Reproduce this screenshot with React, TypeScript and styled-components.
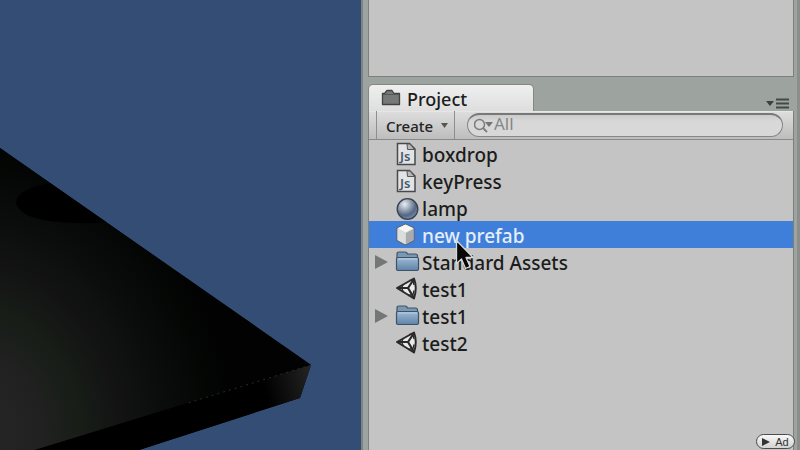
import React from "react";
import styled, { createGlobalStyle } from "styled-components";

const GlobalStyle = createGlobalStyle`
  * { box-sizing: border-box; }
  body { margin: 0; background: #9fa6a1; font-family: "Noto Sans", "Open Sans", sans-serif; color: #1c1c1c; }
  button, input { font-family: inherit; }
`;

const Window = styled.main`
  position: relative;
  display: grid;
  grid-template-columns: minmax(0, 361fr) minmax(0, 439fr);
  height: 100vh;
  overflow: hidden;
`;

const SceneView = styled.section`
  background: #344d75;
  overflow: hidden;
`;

const SceneDrawing = styled.svg`
  display: block;
  width: 100%;
  height: 100%;
`;

const Dock = styled.section`
  display: flex;
  flex-direction: column;
  padding: 0 3px 0 5px;
  background: #9da49f;
  border-left: 2px solid #7b8384;
  border-right: 3px solid #8c8e8d;
  min-width: 0;
`;

const UpperPanel = styled.div`
  flex: 0 0 77px;
  background: #c3c4c3;
  border: 1px solid #7b807d;
  border-top: 0;
`;

const TabBar = styled.header`
  display: flex;
  justify-content: space-between;
  align-items: flex-end;
  flex: 0 0 34px;
  padding-right: 4px;
`;

const Tab = styled.button`
  display: flex;
  align-items: center;
  gap: 6px;
  width: 166px;
  height: 27px;
  padding: 2px 12px 0;
  border: 1px solid #828884;
  border-bottom: 0;
  border-radius: 5px 5px 0 0;
  background: linear-gradient(#efefef, #dedede);
  color: #1c1c1c;
  font-size: 18px;
  font-weight: 500;
  line-height: 24px;
`;

const MenuButton = styled.button`
  display: flex;
  padding: 0 0 2px;
  border: 0;
  background: none;
`;

const Body = styled.div`
  flex: 1;
  min-height: 0;
  background: #c3c4c3;
  border: 1px solid #7b807d;
  border-width: 0 1px;
`;

const Toolbar = styled.div`
  display: flex;
  align-items: stretch;
  height: 29px;
  padding: 0 10px 0 7px;
  background: linear-gradient(#dedede, #bcbdbc);
  border-bottom: 1px solid #888a89;
  box-shadow: inset 0 1px #e6e6e6;
`;

const CreateButton = styled.button`
  display: flex;
  align-items: center;
  gap: 8px;
  width: 79px;
  padding: 2px 0 0 9px;
  border: 1px solid #8d8f8e;
  border-width: 0 1px;
  background: none;
  color: #242424;
  font-size: 15px;
  font-weight: 500;
  line-height: 20px;
`;

const Search = styled.label`
  display: flex;
  flex: 1;
  align-items: center;
  gap: 0;
  height: 24px;
  margin: 2px 0 0 12px;
  padding-left: 6px;
  border: 1px solid #858786;
  border-top: 2px solid #777978;
  border-radius: 12px;
  background: linear-gradient(#cbcbcb, #d8d8d8 30%);
  min-width: 0;
`;

const SearchInput = styled.input`
  flex: 1;
  min-width: 0;
  padding: 0 0 3px;
  border: 0;
  outline: 0;
  background: none;
  color: #6c6e6d;
  font-size: 17px;
  line-height: 18px;
  &::placeholder { color: #858786; opacity: 1; }
`;

const AssetList = styled.ul`
  list-style: none;
  margin: 0;
  padding: 0;
`;

const AssetRow = styled.li<{ $selected?: boolean }>`
  position: relative;
  display: grid;
  grid-template-columns: 20px 25px 1fr;
  align-items: center;
  column-gap: 2px;
  height: 27px;
  padding-left: 4px;
  background: ${(p) => (p.$selected ? "#407fd9" : "transparent")};
  color: ${(p) => (p.$selected ? "#e4eefb" : "#1c1c1c")};
`;

const AssetName = styled.span`
  grid-column: 3;
  padding-top: 3px;
  font-size: 19px;
  font-weight: 500;
  line-height: 24px;
  white-space: nowrap;
`;

const Disclosure = styled.button`
  grid-column: 1;
  display: flex;
  padding: 0 2px;
  border: 0;
  background: none;
`;

const IconCell = styled.span`
  grid-column: 2;
  display: flex;
`;

const Cursor = styled.svg`
  position: absolute;
  z-index: 1;
  left: 86px;
  top: 18px;
`;

const AdButton = styled.button`
  position: absolute;
  right: 5px;
  bottom: 1px;
  display: flex;
  align-items: center;
  justify-content: center;
  gap: 5px;
  width: 39px;
  height: 15px;
  padding: 0;
  border: 1px solid #4c4c4c;
  border-radius: 8px;
  background: linear-gradient(#f8f8f8, #d2d2d2);
  color: #333;
  font-family: "Liberation Sans", Arial, sans-serif;
  font-size: 11px;
  line-height: 12px;
`;

type IconKind = "script" | "material" | "prefab" | "folder" | "scene";

const ScriptIcon = () => (
  <svg width="24" height="26" viewBox="0 0 24 26">
    <path d="M2.500 2.500h12l5.500 5.500v15.500h-17.500z" fill="#e2e3e5" stroke="#4a4a4a" strokeWidth="1.500" />
    <path d="M12 3h3l4.500 5.500h-7z" fill="#b5b7b8" stroke="#555" strokeWidth="1" />
    <text x="5" y="20" fontFamily="Noto Sans, sans-serif" fontSize="13" fontWeight="600" fill="#46586c">Js</text>
  </svg>
);

const MaterialIcon = () => (
  <svg width="24" height="26" viewBox="0 0 24 26">
    <defs>
      <radialGradient id="ball" cx="36%" cy="27%" r="72%">
        <stop offset="0" stopColor="#e9edf3" />
        <stop offset=".4" stopColor="#9aa6b8" />
        <stop offset=".75" stopColor="#566783" />
        <stop offset="1" stopColor="#6f84a8" />
      </radialGradient>
    </defs>
    <circle cx="12.500" cy="14" r="10.300" fill="url(#ball)" stroke="#3a414c" strokeWidth="1.300" />
  </svg>
);

const PrefabIcon = () => (
  <svg width="24" height="26" viewBox="0 0 24 26">
    <path d="M10.500 2L19 6v12.500L10.500 23 2 18.500V6z" fill="#d4d5d5" stroke="#596475" strokeWidth="1.200" strokeLinejoin="round" />
    <path d="M2.500 6.200L10.500 2.500l8 3.700-8 4.300z" fill="#f6f6f4" />
    <path d="M2.500 7l7.500 4v11.300L2.500 18z" fill="#dcdddd" />
    <path d="M11 11l7.500-4v11L11 22.300z" fill="#a9acaf" />
  </svg>
);

const FolderIcon = () => (
  <svg width="25" height="26" viewBox="0 0 25 26">
    <defs>
      <linearGradient id="folder" x2="0" y2="1">
        <stop offset="0" stopColor="#9fbad4" />
        <stop offset="1" stopColor="#5e83a9" />
      </linearGradient>
    </defs>
    <path d="M2 21V5q0-2 2-2h6q2 0 2.500 2h8q2 0 2 2v3" fill="#7898b6" stroke="#3f5266" strokeWidth="1.200" />
    <rect x="1.500" y="8.500" width="22" height="13" rx="1.500" fill="url(#folder)" stroke="#3d5167" strokeWidth="1.200" />
    <path d="M3 10h19" stroke="#b8cee2" />
  </svg>
);

const SceneIcon = () => (
  <svg width="24" height="26" viewBox="0 0 24 26">
    <path d="M2 12L19 2.500q3.500 9 0 20z" fill="#e9eaea" stroke="#292929" strokeWidth="2" strokeLinejoin="round" />
    <path d="M2 12h11L19 3M13 12l6 10" fill="none" stroke="#292929" strokeWidth="2.200" />
    <path d="M8 9l-1.500 3 2 4M14.500 4l3.500 1 1 4M13 19.500l5-1 1-4" fill="none" stroke="#292929" strokeWidth="1.300" />
  </svg>
);

const icons: Record<IconKind, React.FC> = {
  script: ScriptIcon,
  material: MaterialIcon,
  prefab: PrefabIcon,
  folder: FolderIcon,
  scene: SceneIcon,
};

const assets: { name: string; kind: IconKind; selected?: boolean }[] = [
  { name: "boxdrop", kind: "script" },
  { name: "keyPress", kind: "script" },
  { name: "lamp", kind: "material" },
  { name: "new prefab", kind: "prefab", selected: true },
  { name: "Standard Assets", kind: "folder" },
  { name: "test1", kind: "scene" },
  { name: "test1", kind: "folder" },
  { name: "test2", kind: "scene" },
];

const Platform = () => (
  <SceneDrawing viewBox="0 0 361 450" preserveAspectRatio="xMinYMax slice" aria-label="Scene">
    <defs>
      <radialGradient id="surface" gradientUnits="userSpaceOnUse" cx="0" cy="0" r="1" gradientTransform="translate(-30 430) rotate(-12) scale(265 300)">
        <stop offset="0" stopColor="#292829" />
        <stop offset=".25" stopColor="#212121" />
        <stop offset=".42" stopColor="#171d17" />
        <stop offset=".56" stopColor="#131314" />
        <stop offset=".8" stopColor="#070a08" />
        <stop offset="1" stopColor="#010201" />
      </radialGradient>
      <linearGradient id="edge" gradientUnits="userSpaceOnUse" x1="265" y1="390" x2="312" y2="378">
        <stop offset="0" stopColor="#000" />
        <stop offset="1" stopColor="#232323" />
      </linearGradient>
    </defs>
    <path d="M0 148L311 365 300 398 139 450H0z" fill="#000" />
    <path d="M0 148L311 365 35 450H0z" fill="url(#surface)" />
    <path d="M311 365L300 398 139 450H35z" fill="url(#edge)" />
    <path d="M50 183Q17 189 16 203 20 222 78 223 94 224 106 222z" fill="#000" />
    <path d="M311 365L188 403" stroke="#292b29" strokeWidth="1" strokeDasharray="2 4" />
  </SceneDrawing>
);

export default function App() {
  return (
    <>
      <GlobalStyle />
      <Window>
        <SceneView><Platform /></SceneView>
        <Dock>
          <UpperPanel />
          <TabBar>
            <Tab>
              <svg width="20" height="20" viewBox="0 0 20 20">
                <path d="M1.500 15.500V4.500H3.500L6 1.500h5l2 3h5.500v11z" fill="#777979" stroke="#414343" strokeWidth="1.300" strokeLinejoin="round" />
                <path d="M2 5.500h16" stroke="#565858" />
              </svg>
              Project
            </Tab>
            <MenuButton aria-label="Panel menu">
              <svg width="24" height="11" viewBox="0 0 24 11">
                <path d="M0 3h8L4 8z" fill="#3b433e" />
                <path d="M10 1.500h13M10 5.500h13M10 9.500h13" stroke="#414a45" strokeWidth="2" />
              </svg>
            </MenuButton>
          </TabBar>
          <Body>
            <Toolbar>
              <CreateButton>
                Create
                <svg width="7" height="8" viewBox="0 0 7 8"><path d="M0 1h7L3.500 6z" fill="#555" /></svg>
              </CreateButton>
              <Search>
                <svg width="20" height="17" viewBox="0 0 20 17">
                  <circle cx="5.500" cy="7.500" r="5" fill="none" stroke="#7a7c7b" strokeWidth="1.500" />
                  <path d="M9 11l4 4" stroke="#7a7c7b" strokeWidth="1.800" />
                  <path d="M11 5h8l-4 5z" fill="#737574" />
                </svg>
                <SearchInput aria-label="Search assets" placeholder="All" />
              </Search>
            </Toolbar>
            <AssetList>
              {assets.map((asset, i) => {
                const Icon = icons[asset.kind];
                return (
                  <AssetRow key={i} $selected={asset.selected}>
                    {asset.kind === "folder" && (
                      <Disclosure aria-label={`Expand ${asset.name}`}>
                        <svg width="14" height="16" viewBox="0 0 14 16"><path d="M0 1l13 7-13 7z" fill="#757776" /></svg>
                      </Disclosure>
                    )}
                    <IconCell><Icon /></IconCell>
                    <AssetName>{asset.name}</AssetName>
                    {asset.selected && (
                      <Cursor width="20" height="32" viewBox="0 0 20 32">
                        <path d="M1.500 1.500v23l5-4.500 4 9.500 4.500-2-4-9h7z" fill="#080808" stroke="#d6d8da" strokeWidth="1.300" strokeLinejoin="round" />
                      </Cursor>
                    )}
                  </AssetRow>
                );
              })}
            </AssetList>
          </Body>
        </Dock>
        <AdButton>
          <svg width="8" height="8" viewBox="0 0 8 8"><path d="M0 0l8 4-8 4z" fill="#333" /></svg>
          Ad
        </AdButton>
      </Window>
    </>
  );
}
